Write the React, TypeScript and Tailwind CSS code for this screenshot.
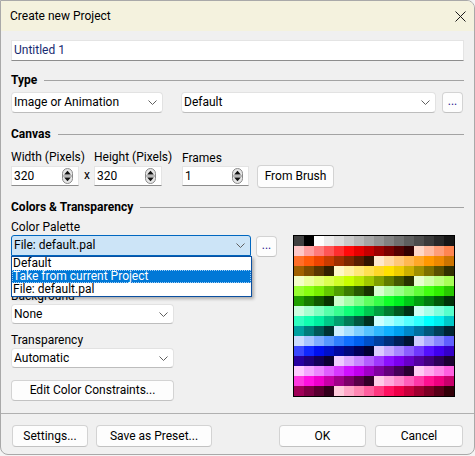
import React from "react";

const PALETTE: string[] = [
  "#404040", "#000000", "#ffffff", "#ececec", "#dcdcdc", "#cacaca", "#b8b8b8", "#a6a6a6", "#949494", "#828282", "#707070", "#5e5e5e", "#4c4c4c", "#3a3a3a", "#282828", "#161616",
  "#ffc8c8", "#ff9e9e", "#ff7b7b", "#ff5555", "#ff2e2e", "#ff0a0a", "#e60000", "#c40000", "#9e0000", "#7a0000", "#550000", "#320000", "#ffd8c8", "#ffbba0", "#ff9e78", "#ff8550",
  "#ff6e28", "#ff5a0a", "#ee4400", "#c83c00", "#a03000", "#7d2800", "#5a1e00", "#321400", "#ffe8cc", "#ffd8a0", "#ffc878", "#ffb850", "#ffa828", "#ff9800", "#ee8800", "#cc7400",
  "#a06000", "#7d4c00", "#5a3600", "#322000", "#fff8c8", "#fff0a0", "#ffe878", "#ffe050", "#ffd828", "#ffe000", "#eecc00", "#ccb000", "#a09000", "#7d7000", "#5a5000", "#323000",
  "#f4ffc8", "#ecff9e", "#e4ff78", "#dcff50", "#d0ff28", "#c8ff00", "#b8e800", "#a0c800", "#80a000", "#607c00", "#445800", "#283200", "#e8ffd0", "#d0ffa8", "#bcff80", "#a8ff58",
  "#98ff30", "#88ff10", "#78ee00", "#64c800", "#50a000", "#3c7c00", "#285800", "#183200", "#d8ffd0", "#b4ffa8", "#98ff88", "#80ff60", "#60ff38", "#40ff10", "#30ee00", "#28c800",
  "#20a000", "#187c00", "#105800", "#083200", "#ccffcc", "#a8ffa8", "#80ff88", "#60ff60", "#38ff48", "#10ff28", "#00ee20", "#00c818", "#00a010", "#007c10", "#005808", "#003208",
  "#ccffe0", "#a8ffd0", "#80ffc0", "#58ffaa", "#38ff90", "#10ff78", "#00ee64", "#00c850", "#00a040", "#007c30", "#005820", "#003216", "#ccfff4", "#a8ffe8", "#80ffdc", "#58ffcc",
  "#30ffc0", "#10ffb0", "#00eea0", "#00c888", "#00a070", "#007c58", "#005840", "#003220", "#ccffff", "#a8ffff", "#80ffff", "#58ffff", "#30ffff", "#00ffff", "#00eeee", "#00c8c8",
  "#00a0a0", "#007c7c", "#005858", "#003232", "#cceeff", "#a8e0ff", "#80d0ff", "#58c4ff", "#30b8ff", "#10b0ff", "#00a0ee", "#0088c8", "#0070a0", "#00587c", "#004058", "#002432",
  "#ccdcff", "#a8c4ff", "#80acff", "#5898ff", "#3080ff", "#1070ff", "#0060ee", "#0050c8", "#0040a0", "#00307c", "#002058", "#001432", "#ccccff", "#a8a8ff", "#8888ff", "#6060ff",
  "#3a48ff", "#1028ff", "#0010ee", "#0010c8", "#0008a0", "#00087c", "#000058", "#000032", "#dcccff", "#c4a8ff", "#a888ff", "#8c60ff", "#7038ff", "#5410ff", "#4000ee", "#3400c8",
  "#2800a0", "#20007c", "#140058", "#0c0032", "#eeccff", "#dca8ff", "#c888ff", "#b460ff", "#a038ff", "#8c10ff", "#7c00ee", "#6800c8", "#5400a0", "#42007c", "#2e0058", "#1c0032",
  "#ffccff", "#f4a8ff", "#ec88ff", "#e060ff", "#d838ff", "#d010ff", "#c000ee", "#a000c8", "#8000a0", "#64007c", "#460058", "#2a0032", "#ffccf4", "#ffa8ee", "#ff88e8", "#ff60e0",
  "#ff38e0", "#ff10e0", "#ee00cc", "#c800a8", "#a00088", "#7c0068", "#580048", "#320028", "#ffcce8", "#ffa8dc", "#ff88cc", "#ff60bc", "#ff38a8", "#ff1090", "#ee0080", "#c8006c",
  "#a00058", "#7c0044", "#580030", "#32001c", "#ffccdc", "#ffa8c8", "#ff88b4", "#ff60a0", "#ff3880", "#ff1060", "#ee0048", "#c8003c", "#a00030", "#7c0024", "#580018", "#320008",
];

function Chevron() {
  return (
    <svg width="9" height="5" viewBox="0 0 9 5">
      <path d="M0.5 0.5 L4.5 4.5 L8.5 0.5" fill="none" stroke="#5f5f5f" strokeWidth="1" />
    </svg>
  );
}

function Spinner() {
  return (
    <svg width="11" height="16" viewBox="0 0 11 16">
      <rect x="0.5" y="0.5" width="10" height="15" rx="5" fill="#e6e6e6" stroke="#8a8a8a" />
      <line x1="1" y1="8" x2="10" y2="8" stroke="#8a8a8a" />
      <path d="M2.2 6.6 L5.5 2.8 L8.8 6.6 Z" fill="#111" />
      <path d="M2.2 9.4 L5.5 13.2 L8.8 9.4 Z" fill="#111" />
    </svg>
  );
}

function Select({ value, className = "" }: { value: string; className?: string }) {
  return (
    <div
      className={`bg-white border border-[#e2e2e2] border-b-[#bdbdbd] rounded-[4px] flex items-center justify-between pl-[2px] pr-[5px] ${className}`}
    >
      <span>{value}</span>
      <Chevron />
    </div>
  );
}

function Button({ children, className = "" }: { children: React.ReactNode; className?: string }) {
  return (
    <div
      className={`bg-[#fdfdfd] border border-[#d3d3d3] border-b-[#c2c2c2] rounded-[4px] flex items-center justify-center ${className}`}
    >
      {children}
    </div>
  );
}

function SpinBox({ value, className = "" }: { value: string; className?: string }) {
  return (
    <div
      className={`h-[20px] bg-white border border-[#e4e4e4] border-b-[#8d8d8d] flex items-center justify-between pl-[2px] pr-[5px] ${className}`}
    >
      <span>{value}</span>
      <Spinner />
    </div>
  );
}

function Heading({ children }: { children: React.ReactNode }) {
  return (
    <div className="h-[18px] flex items-center gap-[7px] font-bold">
      <span>{children}</span>
      <div className="flex-1 h-px bg-[#a3a3a3]" />
    </div>
  );
}

export default function App() {
  return (
    <div
      className="w-[475px] h-[456px] bg-[#f4f4f4] text-[12px] leading-[15px] text-black overflow-hidden"
      style={{ fontFamily: "Roboto, 'Noto Sans', sans-serif" }}
    >
      <div className="w-[475px] h-[455px] bg-[#f0f0f0] border border-[#a9a9a9] rounded-tr-[8px] rounded-b-[8px] overflow-hidden flex flex-col">
        {/* Title bar */}
        <div className="h-[30px] bg-[#f4f2de] flex items-center justify-between pl-[9px] pr-[8px] shrink-0">
          <span>Create new Project</span>
          <svg width="11" height="11" viewBox="0 0 11 11">
            <path d="M0.5 0.5 L10.5 10.5 M10.5 0.5 L0.5 10.5" stroke="#1a1a1a" strokeWidth="1" />
          </svg>
        </div>

        <div className="px-[10px] pt-[9px]">
          <div className="h-[21px] bg-white border border-[#e4e4e4] border-b-[#8d8d8d] flex items-center pl-[2px] text-[#172a70]">
            Untitled 1
          </div>

          <div className="mt-[10px]">
            <Heading>Type</Heading>
          </div>
          <div className="mt-[3px] flex items-start">
            <Select value="Image or Animation" className="w-[152px] h-[21px]" />
            <Select value="Default" className="w-[255px] h-[21px] ml-[18px]" />
            <Button className="w-[21px] h-[21px] ml-[6px] text-[#2a1a90]">
              <span className="-mt-[3px]">...</span>
            </Button>
          </div>

          <div className="mt-[12px]">
            <Heading>Canvas</Heading>
          </div>
          <div className="mt-[7px] flex items-start">
            <div className="flex flex-col w-[68px]">
              <span className="h-[16px] whitespace-nowrap">Width (Pixels)</span>
              <SpinBox value="320" />
            </div>
            <div className="w-[15px] pt-[18px] pl-[5px]">x</div>
            <div className="flex flex-col w-[68px]">
              <span className="h-[16px] whitespace-nowrap">Height (Pixels)</span>
              <SpinBox value="320" />
            </div>
            <div className="flex flex-col w-[67px] ml-[20px]">
              <span className="h-[16px] pt-[1px]">Frames</span>
              <SpinBox value="1" />
            </div>
            <div className="pt-[15px] ml-[8px]">
              <Button className="w-[77px] h-[23px]">From Brush</Button>
            </div>
          </div>

          <div className="mt-[10px]">
            <Heading>Colors &amp; Transparency</Heading>
          </div>
          <div className="mt-[4px] flex items-start">
            <div className="w-[267px] flex flex-col">
              <span className="h-[15px]">Color Palette</span>
              <div className="relative flex items-start">
                <div className="w-[240px] h-[21px] bg-[#cce4f7] border border-[#0067c0] rounded-t-[3px] flex items-center justify-between pl-[2px] pr-[5px]">
                  <span>File: default.pal</span>
                  <Chevron />
                </div>
                <Button className="w-[21px] h-[21px] ml-[5px] mt-[1px] text-[#2a1a90]">
                  <span className="-mt-[3px]">...</span>
                </Button>
                {/* open dropdown list */}
                <div className="absolute left-0 top-[21px] z-10 w-[241px] bg-white border border-[#0b4fa0] shadow-[2px_2px_3px_rgba(0,0,0,0.28)] flex flex-col">
                  <div className="h-[13px] leading-[13px] pl-[1px]">Default</div>
                  <div className="h-[13px] leading-[11px] bg-[#0078d7] text-white border border-dotted border-[#9fcdf5]">
                    Take from current Project
                  </div>
                  <div className="h-[13px] leading-[13px] pl-[1px]">File: default.pal</div>
                </div>
              </div>
              <span className="h-[15px] mt-[32px]">Background</span>
              <Select value="None" className="w-[163px] h-[20px]" />
              <span className="h-[15px] mt-[9px]">Transparency</span>
              <Select value="Automatic" className="w-[163px] h-[20px]" />
              <Button className="w-[163px] h-[21px] mt-[12px]">Edit Color Constraints...</Button>
            </div>
            <div className="ml-[15px] mt-[15px] w-[162px] h-[162px] border border-black grid grid-cols-[repeat(16,10px)] grid-rows-[repeat(16,10px)]">
              {PALETTE.map((c, i) => (
                <div key={i} style={{ backgroundColor: c }} />
              ))}
            </div>
          </div>
        </div>

        <div className="mt-[12px] h-px bg-[#b0b0b0] shrink-0" />

        <div className="mt-[11px] px-[11px] flex items-start">
          <Button className="w-[76px] h-[22px]">Settings...</Button>
          <Button className="w-[116px] h-[22px] ml-[8px]">Save as Preset...</Button>
          <Button className="w-[87px] h-[22px] ml-[67px] border-[#0a64c8] border-b-[#0a64c8]">OK</Button>
          <Button className="w-[88px] h-[22px] ml-[9px]">Cancel</Button>
        </div>
      </div>
    </div>
  );
}
